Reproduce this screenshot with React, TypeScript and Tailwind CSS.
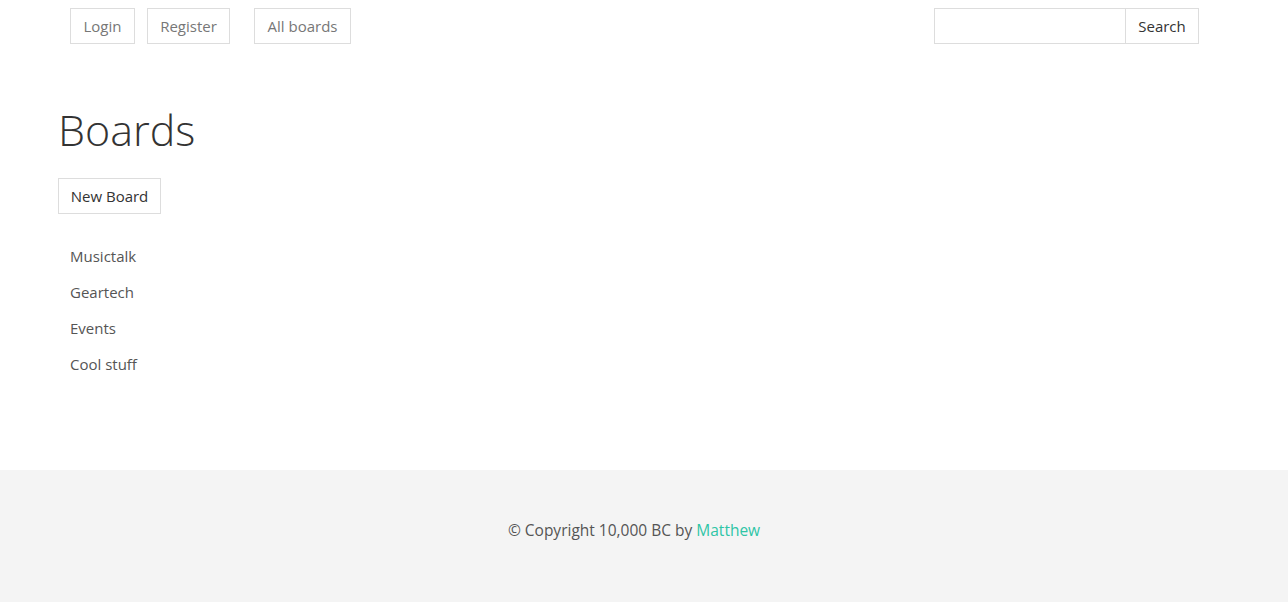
const boards = ["Musictalk", "Geartech", "Events", "Cool stuff"];

export default function App() {
  return (
    <div className="flex min-h-[602px] flex-col bg-white font-['Open_Sans',sans-serif] text-[#333]">
      <nav className="flex h-[52px] items-start justify-between pt-2 pl-[70px] pr-[89px]">
        <div className="flex items-center">
          <button className="h-9 w-[65px] border border-[#ddd] text-[15px] text-[#777]">Login</button>
          <button className="ml-3 h-9 w-[83px] border border-[#ddd] text-[15px] text-[#777]">Register</button>
          <button className="ml-6 h-9 w-[97px] border border-[#ddd] text-[15px] text-[#777]">All boards</button>
        </div>
        <form className="flex">
          <input className="h-9 w-[192px] border border-[#ddd] outline-none" />
          <button className="h-9 w-[73px] border border-l-0 border-[#ddd] text-[15px] text-[#333]">Search</button>
        </form>
      </nav>

      <main className="flex-1 px-[58px]">
        <h1 className="mt-[50px] text-[43px] leading-[56px] font-light text-[#333]">Boards</h1>
        <button className="mt-[20px] h-9 w-[103px] border border-[#ddd] text-[15px] text-[#333]">New Board</button>
        <ul className="mt-6 pl-3">
          {boards.map((b) => (
            <li key={b} className="h-9 text-[15px] leading-[36px] text-[#555]">{b}</li>
          ))}
        </ul>
      </main>

      <footer className="mt-[76px] flex h-[132px] justify-center bg-[#f4f4f4] pt-[48px] text-[15.5px] leading-[24px] text-[#555]">
        <p className="mr-5">
          © Copyright 10,000 BC by <a className="text-[#2ec5a6]">Matthew</a>
        </p>
      </footer>
    </div>
  );
}
